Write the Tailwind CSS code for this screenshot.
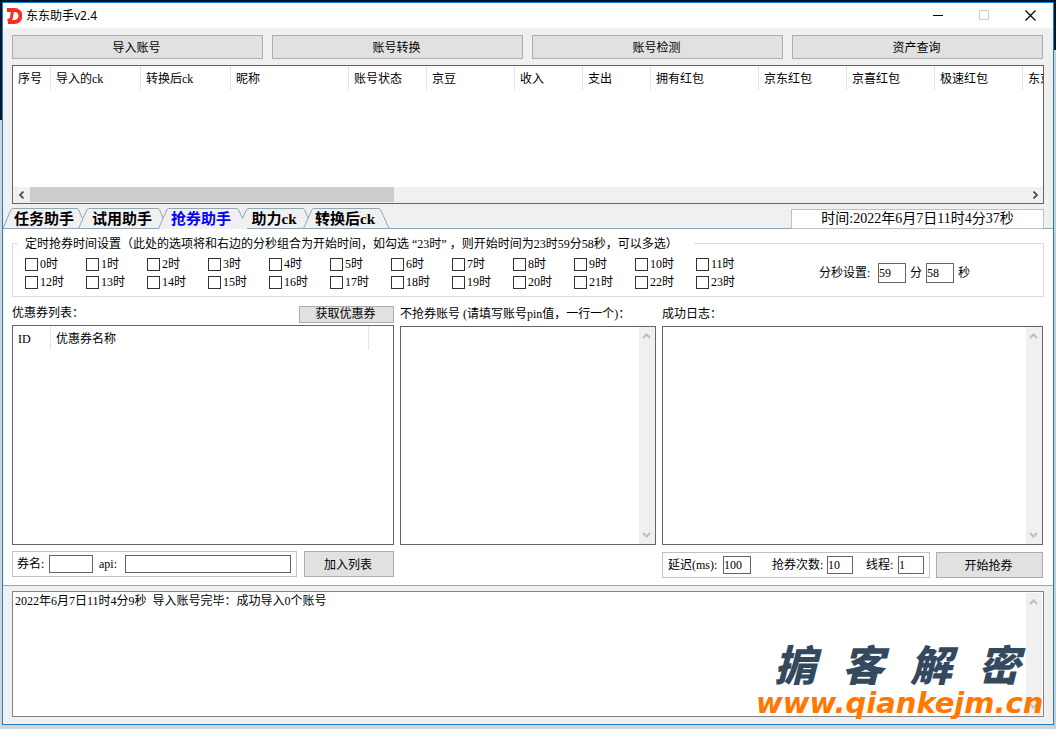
<!DOCTYPE html>
<html lang="zh-CN">
<head>
<meta charset="utf-8">
<title>东东助手v2.4</title>
<script src="https://cdn.jsdelivr.net/npm/@tailwindcss/browser@4"></script>
</head>
<body class="font-['Liberation_Serif','Noto_Sans_CJK_SC',serif] text-xs leading-4 text-black">
<div class="relative flex min-h-screen flex-col bg-[linear-gradient(to_bottom,#03152d_120px,#d3d6d9_120px)] px-0.5 pt-0.5 pb-1">
  <div class="absolute top-[50px] right-0 bottom-0 w-0.5 bg-[#c9cdd1]"></div>
  <main class="relative flex flex-1 flex-col border border-[#1a80d2] bg-[#f0f0f0]">
    <header class="flex h-[25px] items-center bg-white pl-[3px]">
      <svg class="h-4 w-4" viewBox="0 0 16 16" fill="none" stroke="#fb2d20"><path d="M1 2h7.500a5.500 5.500 0 0 1 0 12H2" stroke-width="4"/><path d="M6.500 3 5.500 9.500Q5 12 1.500 12.500" stroke-width="3"/></svg>
      <h1 class="flex-1 pl-1 font-['Noto_Sans','Noto_Sans_CJK_SC',sans-serif] text-xs">东东助手v2.4</h1>
      <button aria-label="最小化" class="flex h-full w-[46px] items-center justify-center"><svg class="h-[11px] w-[11px]" viewBox="0 0 11 11"><path d="M0 5.500h10" stroke="#000"/></svg></button>
      <button aria-label="最大化" disabled class="flex h-full w-[46px] items-center justify-center"><svg class="h-[11px] w-[11px]" viewBox="0 0 11 11"><path d="M.5.5h9v9h-9z" fill="none" stroke="#ccc"/></svg></button>
      <button aria-label="关闭" class="flex h-full w-[46px] items-center justify-center"><svg class="h-[11px] w-[11px]" viewBox="0 0 11 11"><path d="M.5.5l10 10M10.500.5l-10 10" stroke="#000" stroke-width="1.200"/></svg></button>
    </header>

    <div class="mt-[7px] mr-[10px] ml-[9px] grid grid-cols-4 gap-[9px]">
      <button class="h-6 border border-[#adadad] bg-[#e1e1e1] pt-0.5 pr-0.5">导入账号</button>
      <button class="h-6 border border-[#adadad] bg-[#e1e1e1] pt-0.5 pr-0.5">账号转换</button>
      <button class="h-6 border border-[#adadad] bg-[#e1e1e1] pt-0.5 pr-0.5">账号检测</button>
      <button class="h-6 border border-[#adadad] bg-[#e1e1e1] pt-0.5 pr-0.5">资产查询</button>
    </div>

    <section class="mt-1.5 mr-[9px] ml-[9px] flex h-[139px] flex-col justify-between border border-[#646464] bg-white">
      <div class="overflow-hidden">
        <table class="w-[1098px] table-fixed border-separate border-spacing-0 text-left">
          <thead><tr class="h-6">
            <th class="w-[38px] border-r border-[#e5e5e5] pt-0.5 pl-[5px] font-normal">序号</th>
            <th class="w-[90px] border-r border-[#e5e5e5] pt-0.5 pl-[5px] font-normal">导入的ck</th>
            <th class="w-[90px] border-r border-[#e5e5e5] pt-0.5 pl-[5px] font-normal">转换后ck</th>
            <th class="w-[118px] border-r border-[#e5e5e5] pt-0.5 pl-[5px] font-normal">昵称</th>
            <th class="w-[78px] border-r border-[#e5e5e5] pt-0.5 pl-[5px] font-normal">账号状态</th>
            <th class="w-[88px] border-r border-[#e5e5e5] pt-0.5 pl-[5px] font-normal">京豆</th>
            <th class="w-[68px] border-r border-[#e5e5e5] pt-0.5 pl-[5px] font-normal">收入</th>
            <th class="w-[68px] border-r border-[#e5e5e5] pt-0.5 pl-[5px] font-normal">支出</th>
            <th class="w-[108px] border-r border-[#e5e5e5] pt-0.5 pl-[5px] font-normal">拥有红包</th>
            <th class="w-[88px] border-r border-[#e5e5e5] pt-0.5 pl-[5px] font-normal">京东红包</th>
            <th class="w-[88px] border-r border-[#e5e5e5] pt-0.5 pl-[5px] font-normal">京喜红包</th>
            <th class="w-[88px] border-r border-[#e5e5e5] pt-0.5 pl-[5px] font-normal">极速红包</th>
            <th class="w-[88px] pt-0.5 pl-[5px] font-normal">东京</th>
          </tr></thead>
        </table>
      </div>
      <div class="flex h-4 bg-[#f0f0f0]">
        <button aria-label="向左滚动" class="flex w-[17px] items-center justify-center"><svg class="h-2 w-2" viewBox="0 0 8 8"><path d="M5.500.5 2 4l3.500 3.500" fill="none" stroke="#505050" stroke-width="1.800"/></svg></button>
        <div class="flex-1"><div class="h-[15px] w-[36.500%] bg-[#cdcdcd]"></div></div>
        <button aria-label="向右滚动" class="flex w-[17px] items-center justify-center"><svg class="h-2 w-2" viewBox="0 0 8 8"><path d="M2.500.5 6 4 2.500 7.500" fill="none" stroke="#505050" stroke-width="1.800"/></svg></button>
      </div>
    </section>

    <div class="relative mt-1 flex h-[21px] justify-between pr-[9px]">
      <div class="absolute inset-x-0 bottom-0 h-px bg-[#91a7b4]"></div>
      <svg class="absolute top-0 left-0 h-[21px] w-[390px]" viewBox="0 0 390 21" fill="none" stroke="#91a7b4">
        <path d="M156 20.500h88" stroke="#f0f0f0"/>
        <path d="M0 20.500 8 1.500 9.500.5H74L75.500 1.500 79 10M75.500 20.500 84 1.500 85.500.5H155L156.500 1.500 160 10M155.500 20.500 164 1.500 165.500.5H234L235.500 1.500 239.500 10.500 243.500 1.500 245 .5H300L301.500 1.500 305 10M300.500 20.500 309 1.500 310.500.5H376L377.500 1.500 386 20.500"/>
      </svg>
      <nav role="tablist" class="relative flex text-[15px] leading-[22px] font-bold">
        <button role="tab" class="w-[82px]">任务助手</button>
        <button role="tab" class="w-[74px]">试用助手</button>
        <button role="tab" aria-selected="true" class="w-[84px] text-[#0000ff]">抢券助手</button>
        <button role="tab" class="w-[62px]">助力ck</button>
        <button role="tab" class="w-[80px]">转换后ck</button>
      </nav>
      <div class="relative mt-px w-[253px] border border-[#c0c0c0] bg-white text-center text-sm leading-[18px]">时间:2022年6月7日11时4分37秒</div>
    </div>

    <section role="tabpanel" class="border-b border-[#91a7b4] bg-white pt-1.5 pr-[9px] pb-[7px] pl-[9px]">
      <fieldset class="border border-[#dcdcdc] pr-[73px] pb-[5px] pl-[5px]">
        <legend class="h-4 pr-4 pl-[7px]">定时抢券时间设置<span class="font-['Noto_Sans_CJK_SC',sans-serif]">（</span>此处的选项将和右边的分秒组合为开始时间，如勾选 “23时” ，则开始时间为23时59分58秒，可以多选）</legend>
        <div class="flex items-center justify-between pt-1 pl-[7px]">
          <div class="grid grid-cols-[repeat(12,61px)]">
            <label class="flex h-[18px] items-center gap-0.5"><input type="checkbox" class="h-[13px] w-[13px] appearance-none border border-[#333] bg-white checked:bg-[#333]">0时</label>
            <label class="flex h-[18px] items-center gap-0.5"><input type="checkbox" class="h-[13px] w-[13px] appearance-none border border-[#333] bg-white checked:bg-[#333]">1时</label>
            <label class="flex h-[18px] items-center gap-0.5"><input type="checkbox" class="h-[13px] w-[13px] appearance-none border border-[#333] bg-white checked:bg-[#333]">2时</label>
            <label class="flex h-[18px] items-center gap-0.5"><input type="checkbox" class="h-[13px] w-[13px] appearance-none border border-[#333] bg-white checked:bg-[#333]">3时</label>
            <label class="flex h-[18px] items-center gap-0.5"><input type="checkbox" class="h-[13px] w-[13px] appearance-none border border-[#333] bg-white checked:bg-[#333]">4时</label>
            <label class="flex h-[18px] items-center gap-0.5"><input type="checkbox" class="h-[13px] w-[13px] appearance-none border border-[#333] bg-white checked:bg-[#333]">5时</label>
            <label class="flex h-[18px] items-center gap-0.5"><input type="checkbox" class="h-[13px] w-[13px] appearance-none border border-[#333] bg-white checked:bg-[#333]">6时</label>
            <label class="flex h-[18px] items-center gap-0.5"><input type="checkbox" class="h-[13px] w-[13px] appearance-none border border-[#333] bg-white checked:bg-[#333]">7时</label>
            <label class="flex h-[18px] items-center gap-0.5"><input type="checkbox" class="h-[13px] w-[13px] appearance-none border border-[#333] bg-white checked:bg-[#333]">8时</label>
            <label class="flex h-[18px] items-center gap-0.5"><input type="checkbox" class="h-[13px] w-[13px] appearance-none border border-[#333] bg-white checked:bg-[#333]">9时</label>
            <label class="flex h-[18px] items-center gap-0.5"><input type="checkbox" class="h-[13px] w-[13px] appearance-none border border-[#333] bg-white checked:bg-[#333]">10时</label>
            <label class="flex h-[18px] items-center gap-0.5"><input type="checkbox" class="h-[13px] w-[13px] appearance-none border border-[#333] bg-white checked:bg-[#333]">11时</label>
            <label class="flex h-[18px] items-center gap-0.5"><input type="checkbox" class="h-[13px] w-[13px] appearance-none border border-[#333] bg-white checked:bg-[#333]">12时</label>
            <label class="flex h-[18px] items-center gap-0.5"><input type="checkbox" class="h-[13px] w-[13px] appearance-none border border-[#333] bg-white checked:bg-[#333]">13时</label>
            <label class="flex h-[18px] items-center gap-0.5"><input type="checkbox" class="h-[13px] w-[13px] appearance-none border border-[#333] bg-white checked:bg-[#333]">14时</label>
            <label class="flex h-[18px] items-center gap-0.5"><input type="checkbox" class="h-[13px] w-[13px] appearance-none border border-[#333] bg-white checked:bg-[#333]">15时</label>
            <label class="flex h-[18px] items-center gap-0.5"><input type="checkbox" class="h-[13px] w-[13px] appearance-none border border-[#333] bg-white checked:bg-[#333]">16时</label>
            <label class="flex h-[18px] items-center gap-0.5"><input type="checkbox" class="h-[13px] w-[13px] appearance-none border border-[#333] bg-white checked:bg-[#333]">17时</label>
            <label class="flex h-[18px] items-center gap-0.5"><input type="checkbox" class="h-[13px] w-[13px] appearance-none border border-[#333] bg-white checked:bg-[#333]">18时</label>
            <label class="flex h-[18px] items-center gap-0.5"><input type="checkbox" class="h-[13px] w-[13px] appearance-none border border-[#333] bg-white checked:bg-[#333]">19时</label>
            <label class="flex h-[18px] items-center gap-0.5"><input type="checkbox" class="h-[13px] w-[13px] appearance-none border border-[#333] bg-white checked:bg-[#333]">20时</label>
            <label class="flex h-[18px] items-center gap-0.5"><input type="checkbox" class="h-[13px] w-[13px] appearance-none border border-[#333] bg-white checked:bg-[#333]">21时</label>
            <label class="flex h-[18px] items-center gap-0.5"><input type="checkbox" class="h-[13px] w-[13px] appearance-none border border-[#333] bg-white checked:bg-[#333]">22时</label>
            <label class="flex h-[18px] items-center gap-0.5"><input type="checkbox" class="h-[13px] w-[13px] appearance-none border border-[#333] bg-white checked:bg-[#333]">23时</label>
          </div>
          <div class="flex items-center gap-1">
            <label for="minute" class="w-[55px]">分秒设置:</label>
            <input id="minute" value="59" class="h-5 w-7 border border-[#646464] bg-white">
            <label for="second">分</label>
            <input id="second" value="58" class="h-5 w-7 border border-[#646464] bg-white">
            <span>秒</span>
          </div>
        </div>
      </fieldset>

      <div class="grid grid-cols-[382fr_256fr_381fr] gap-1.5 pr-px">
        <div>
          <div class="flex h-7 items-center justify-between pt-1">
            <span>优惠券列表：</span>
            <button class="mt-[3px] h-[17px] w-[95px] border border-[#adadad] bg-[#e1e1e1] pr-0.5 leading-[15px]">获取优惠券</button>
          </div>
          <div class="h-[220px] border border-[#646464]">
            <table class="w-full table-fixed border-separate border-spacing-0 text-left">
              <thead><tr class="h-6">
                <th class="w-[38px] border-r border-[#e5e5e5] pt-0.5 pl-[5px] font-normal">ID</th>
                <th class="border-r border-[#e5e5e5] pt-0.5 pl-[5px] font-normal">优惠券名称</th>
                <td class="w-6"></td>
              </tr></thead>
            </table>
          </div>
          <div class="mt-1.5 flex gap-[7px]">
            <div class="flex h-[26px] flex-1 items-center border border-[#c0c0c0] pr-[5px] pl-1">
              <label for="coupon" class="w-8">券名:</label>
              <input id="coupon" class="h-[18px] w-11 border border-[#646464] bg-white">
              <label for="api" class="w-8 pl-1.5">api:</label>
              <input id="api" class="h-[18px] min-w-0 flex-1 border border-[#646464] bg-white">
            </div>
            <button class="h-[26px] w-[90px] border border-[#adadad] bg-[#e1e1e1] pt-0.5 pr-0.5">加入列表</button>
          </div>
        </div>

        <div>
          <label for="skip" class="flex h-[29px] items-center pt-1">不抢券账号 (请填写账号pin值，一行一个)：</label>
          <div class="flex h-[219px] border border-[#646464]">
            <textarea id="skip" class="min-w-0 flex-1 resize-none"></textarea>
            <div class="flex w-4 flex-col justify-between bg-[#f0f0f0]">
              <svg class="h-[18px] w-4" viewBox="0 0 16 18"><path d="M4 11l3.500-3.500L11 11" fill="none" stroke="#bfbfbf" stroke-width="2"/></svg>
              <svg class="h-[18px] w-4" viewBox="0 0 16 18"><path d="M4 7l3.500 3.500L11 7" fill="none" stroke="#bfbfbf" stroke-width="2"/></svg>
            </div>
          </div>
        </div>

        <div>
          <label for="okLog" class="flex h-[29px] items-center pt-1">成功日志：</label>
          <div class="flex h-[219px] border border-[#646464]">
            <textarea id="okLog" class="min-w-0 flex-1 resize-none"></textarea>
            <div class="flex w-4 flex-col justify-between bg-[#f0f0f0]">
              <svg class="h-[18px] w-4" viewBox="0 0 16 18"><path d="M4 11l3.500-3.500L11 11" fill="none" stroke="#bfbfbf" stroke-width="2"/></svg>
              <svg class="h-[18px] w-4" viewBox="0 0 16 18"><path d="M4 7l3.500 3.500L11 7" fill="none" stroke="#bfbfbf" stroke-width="2"/></svg>
            </div>
          </div>
          <div class="mt-[7px] flex gap-1.5">
            <div class="flex h-[26px] flex-1 items-center justify-between border border-[#c0c0c0] pr-[5px] pl-[5px]">
              <div class="flex items-center"><label for="delay" class="w-[55px]">延迟(ms):</label><input id="delay" value="100" class="h-[18px] w-7 border border-[#646464] bg-white"></div>
              <div class="flex items-center pl-2"><label for="times" class="w-[55px]">抢券次数:</label><input id="times" value="10" class="h-[18px] w-[26px] border border-[#646464] bg-white"></div>
              <div class="flex items-center"><label for="threads" class="w-8">线程:</label><input id="threads" value="1" class="h-[18px] w-[26px] border border-[#646464] bg-white"></div>
            </div>
            <button class="h-[26px] w-[107px] border border-[#adadad] bg-[#e1e1e1] pt-0.5 pr-0.5">开始抢券</button>
          </div>
        </div>
      </div>
    </section>

    <section class="mt-[5px] mr-[9px] mb-[7px] ml-[9px] flex flex-1 border border-[#828282] bg-white p-px">
      <p class="flex-1 pl-px">2022年6月7日11时4分9秒&nbsp; 导入账号完毕：成功导入0个账号</p>
      <div class="flex w-4 flex-col justify-between bg-[#f0f0f0]">
        <svg class="h-[18px] w-4" viewBox="0 0 16 18"><path d="M4 11l3.500-3.500L11 11" fill="none" stroke="#bfbfbf" stroke-width="2"/></svg>
        <svg class="h-[18px] w-4" viewBox="0 0 16 18"><path d="M4 7l3.500 3.500L11 7" fill="none" stroke="#bfbfbf" stroke-width="2"/></svg>
      </div>
    </section>
  </main>
  <aside class="absolute right-[8px] bottom-[12px] flex w-[292px] flex-col gap-1 italic">
    <div class="flex justify-between pr-7 pl-[18px] font-['Noto_Sans_CJK_SC',sans-serif] text-[42px] leading-[44px] font-black text-[#34495e]"><span>掮</span><span>客</span><span>解</span><span>密</span></div>
    <a href="#" class="font-['DejaVu_Sans',sans-serif] text-[29px] leading-7 font-bold whitespace-nowrap text-[#ff7800]">www.qiankejm.cn</a>
  </aside>
</div>
</body>
</html>
